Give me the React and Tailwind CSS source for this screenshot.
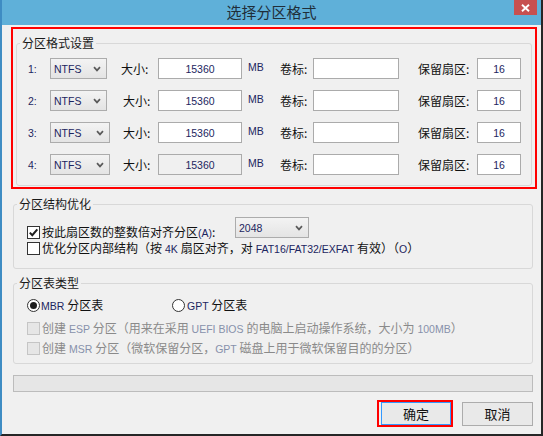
import React from "react";

// latin runs are drawn narrower and slightly navy, like Tahoma with ClearType
function L({ children, muted }) {
  return (
    <span
      className={`font-['Liberation_Sans',sans-serif] text-[10.5px] ${
        muted ? "text-[#8791ab]" : "text-[#1c2560]"
      }`}
    >
      {children}
    </span>
  );
}

function Chevron() {
  return (
    <svg width="8" height="6" viewBox="0 0 8 6">
      <path d="M1 1.2 L4 4.4 L7 1.2" fill="none" stroke="#5a5a5a" strokeWidth="1.7" />
    </svg>
  );
}

function Combo({ value, w }) {
  return (
    <div
      className={`flex items-center justify-between h-[21px] border border-[#acacac] bg-linear-to-b from-[#f3f3f3] to-[#e4e4e4] pl-[3px] pr-[5px] ${w}`}
    >
      <L>{value}</L>
      <Chevron />
    </div>
  );
}

function Field({ w, value, gray }) {
  return (
    <div
      className={`flex items-center justify-center h-[21px] border border-[#ababab] ${
        gray ? "bg-[#f0f0f0]" : "bg-white"
      } ${w}`}
    >
      {value && <L>{value}</L>}
    </div>
  );
}

function Check({ checked, disabled }) {
  return (
    <div
      className={`flex items-center justify-center w-[13px] h-[13px] border ${
        disabled ? "border-[#c5c5c5] bg-[#e6e6e6]" : "border-[#333333] bg-white"
      }`}
    >
      {checked && (
        <svg width="11" height="11" viewBox="0 0 11 11">
          <path d="M1.8 5.6 L4.3 8.2 L9.3 2.4" fill="none" stroke="#1e1e1e" strokeWidth="2" />
        </svg>
      )}
    </div>
  );
}

function Radio({ on }) {
  return (
    <div className="flex items-center justify-center w-[13px] h-[13px] rounded-full border border-[#333333] bg-white">
      {on && <div className="w-[7px] h-[7px] rounded-full bg-[#1e1e1e]" />}
    </div>
  );
}

function FmtRow({ n, selW, sizePad, gray }) {
  return (
    <div className="flex items-center h-[21px]">
      <span className="w-[22px]">
        <L>{n}:</L>
      </span>
      <div className="w-[71px]">
        <Combo value="NTFS" w={selW} />
      </div>
      <span className={`w-[37px] ${sizePad}`}>大小:</span>
      <Field w="w-[84px]" value="15360" gray={gray} />
      <span className="w-[38px] pl-[6px] self-start leading-[16px]">
        <L>MB</L>
      </span>
      <span className="w-[33px]">卷标:</span>
      <Field w="w-[86px]" />
      <span className="w-[59px] ml-[19px]">保留扇区:</span>
      <Field w="w-[44px]" value="16" />
    </div>
  );
}

function Group({ title, className, children }) {
  return (
    <fieldset className={`border border-[#d8d8d8] rounded-[3px] ${className}`}>
      <legend className="ml-[3px] px-[2px] leading-[16px] text-[#1a1a1a]">{title}</legend>
      {children}
    </fieldset>
  );
}

export default function App() {
  return (
    <div className="w-[543px] h-[436px] flex flex-col bg-[#f0f0f0] border-l-2 border-l-[#3e8cc3] border-r-2 border-r-[#262626] border-b-2 border-b-[#262626] font-['Noto_Sans_CJK_SC',sans-serif] text-[12px] leading-[16px] text-[#111]">
      {/* title bar */}
      <div className="grid grid-cols-[1fr_auto_1fr] h-[25px] bg-[#5fb0d9]">
        <div />
        <span className="text-[15px] leading-[23px] text-[#1f2e39]">选择分区格式</span>
        <div className="flex justify-end items-start pr-[4px]">
          <div className="flex items-center justify-center w-[23px] h-[15px] bg-[#c75050]">
            <svg width="9" height="8" viewBox="0 0 9 8">
              <path d="M1 0.8 L8 7.2 M8 0.8 L1 7.2" stroke="#fff" strokeWidth="1.9" />
            </svg>
          </div>
        </div>
      </div>

      {/* body */}
      <div className="flex flex-col pt-[2px]">
        <div className="ml-[9px] w-[526px] border-2 border-[#ff0000] px-[3px] pt-[6px] pb-[1px]">
          <Group title="分区格式设置">
            <div className="flex flex-col gap-[11px] pt-[7px] pb-[10px] pl-[11px]">
              <FmtRow n="1" selW="w-[57px]" sizePad="" />
              <FmtRow n="2" selW="w-[57px]" sizePad="pl-[2px]" />
              <FmtRow n="3" selW="w-[60px]" sizePad="pl-[2px]" />
              <FmtRow n="4" selW="w-[60px]" sizePad="pl-[2px]" gray />
            </div>
          </Group>
        </div>

        <Group title="分区结构优化" className="ml-[11px] w-[520px] mt-[7px]">
          <div className="flex flex-col pt-[5px] pb-[12px] pl-[13px]">
            <div className="flex items-start">
              <div className="w-[208px] mt-[7px] h-[16px] flex items-center gap-[2px]">
                <Check checked />
                <span>
                  按此扇区数的整数倍对齐分区<L>(A)</L>:
                </span>
              </div>
              <Combo value="2048" w="w-[74px]" />
            </div>
            <div className="h-[16px] flex items-center gap-[2px]">
              <Check />
              <span>
                优化分区内部结构（按<L> 4K </L>扇区对齐，对<L> FAT16/FAT32/EXFAT </L>有效）（<L>O</L>）
              </span>
            </div>
          </div>
        </Group>

        <Group title="分区表类型" className="ml-[11px] w-[520px] mt-[6px]">
          <div className="flex flex-col pt-[6px] pb-[7px] pl-[13px]">
            <div className="h-[16px] flex items-center">
              <div className="w-[145px] flex items-center gap-[1px]">
                <Radio on />
                <span>
                  <L>MBR </L>分区表
                </span>
              </div>
              <div className="flex items-center gap-[2px]">
                <Radio />
                <span>
                  <L>GPT </L>分区表
                </span>
              </div>
            </div>
            <div className="h-[16px] mt-[7px] flex items-center gap-[2px] text-[#8a8a8a]">
              <Check disabled />
              <span>
                创建<L muted> ESP </L>分区（用来在采用<L muted> UEFI BIOS </L>的电脑上启动操作系统，大小为
                <L muted> 100MB</L>）
              </span>
            </div>
            <div className="h-[16px] mt-[4px] flex items-center gap-[2px] text-[#8a8a8a]">
              <Check disabled />
              <span>
                创建<L muted> MSR </L>分区（微软保留分区，<L muted>GPT </L>磁盘上用于微软保留目的的分区）
              </span>
            </div>
          </div>
        </Group>

        <div className="ml-[11px] w-[520px] h-[17px] mt-[11px] border border-[#bcbcbc] bg-[#e6e6e6]" />

        <div className="flex justify-end items-center gap-[9px] pr-[8px] mt-[8px]">
          <div className="border-2 border-[#ff0000] pl-[2px]">
            <button className="flex items-center justify-center w-[70px] h-[23px] border border-[#3399ff] bg-[#e9e9e9] text-[13px] text-[#111]">
              确定
            </button>
          </div>
          <button className="flex items-center justify-center w-[71px] h-[24px] border border-[#acacac] bg-[#e9e9e9] text-[13px] text-[#111]">
            取消
          </button>
        </div>
      </div>
    </div>
  );
}
